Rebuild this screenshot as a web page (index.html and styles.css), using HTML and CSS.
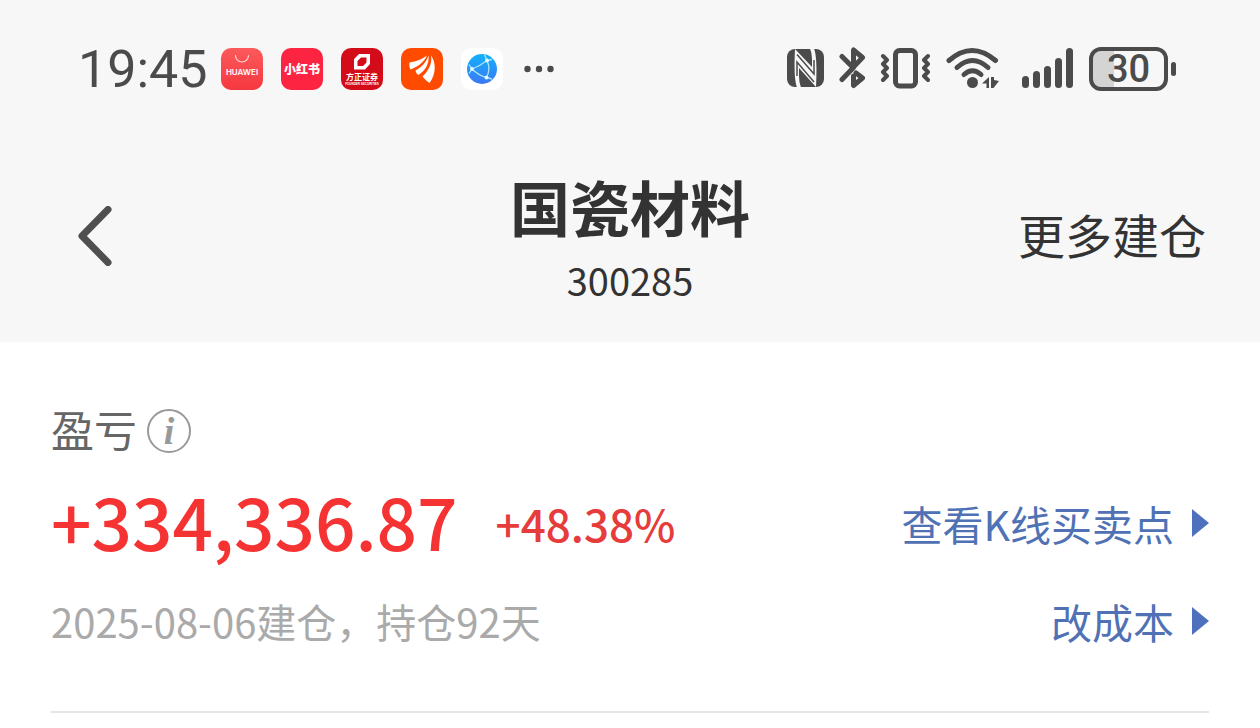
FILE: index.html
```html
<!DOCTYPE html>
<html lang="zh-CN">
<head>
  <meta charset="UTF-8">
  <meta name="viewport" content="width=device-width, initial-scale=1.0">
  <title>国瓷材料 300285</title>
  <link rel="stylesheet" href="styles.css">
</head>
<body>
  <header class="header">
    <div class="status-bar">
      <div class="status-left">
        <time class="clock">19:45</time>
        <div class="apps">
          <svg class="app" viewBox="0 0 42 42" role="img" aria-label="HUAWEI">
            <defs>
              <linearGradient id="hw" x1="0" y1="0" x2="0" y2="1">
                <stop offset="0" stop-color="#fb5a5c"/>
                <stop offset="1" stop-color="#f6373f"/>
              </linearGradient>
            </defs>
            <rect width="42" height="42" rx="10" fill="url(#hw)"/>
            <path d="M14.5 7.500a6.500 6.500 0 0 0 13 0" fill="none" stroke="#ffd9d9" stroke-width="1.200" stroke-linecap="round"/>
            <text x="21" y="27" class="app-text huawei">HUAWEI</text>
          </svg>
          <svg class="app" viewBox="0 0 42 42" role="img" aria-label="小红书">
            <rect width="42" height="42" rx="10" fill="#fd2442"/>
            <text x="21" y="26" class="app-text redbook">小红书</text>
          </svg>
          <svg class="app" viewBox="0 0 42 42" role="img" aria-label="方正证券">
            <rect width="42" height="42" rx="10" fill="#d40b19"/>
            <path fill="#fff" fill-rule="evenodd" d="M18 6h11v10l-5 5.500H13V11zM20 9.500L16.500 13v5H22l3.500-3.500v-5z"/>
            <text x="21" y="32" class="app-text founder">方正证券</text>
            <text x="21" y="37" class="app-text founder-en">FOUNDER SECURITIES</text>
          </svg>
          <svg class="app" viewBox="0 0 42 42" role="img" aria-label="东方财富">
            <rect width="42" height="42" rx="10" fill="#ff4b00"/>
            <g fill="#fff">
              <path d="M26 7.500C21 11 16 13.500 8.500 14.500c-.5 3 0 5 1 7C16 19 22.500 15 26 7.500z"/>
              <path d="M27.500 7.500C25 15 20 19.500 14.500 22.500c.5 2 1.500 3.500 2.800 4.500C24 23 28.500 16 27.500 7.500z"/>
              <path d="M30 7.500c1.500 9-3 15.500-8.500 21 2 2.500 4 4.500 7 6.500C35.500 26 35 14 30 7.500z"/>
            </g>
          </svg>
          <svg class="app" viewBox="0 0 42 42" role="img" aria-label="浏览器">
            <defs>
              <linearGradient id="br" x1="0" y1="0" x2="0" y2="1">
                <stop offset="0" stop-color="#12b2fa"/>
                <stop offset="1" stop-color="#3c78f4"/>
              </linearGradient>
            </defs>
            <rect width="42" height="42" rx="10" fill="#fff"/>
            <circle cx="21" cy="21" r="15" fill="url(#br)"/>
            <g fill="none" stroke="#a6e4fc" stroke-width="1.300">
              <path d="M11 21Q19 18 26 12.500M11 21Q17 27 25.500 29.500M26 12.500Q30 21 25.500 29.500"/>
              <path d="M8 16.500L11 21l-3 4.500M26 12.500L23.500 6.500M26 12.500l5-1M25.500 29.500L31 31"/>
            </g>
            <g fill="#e4faff">
              <circle cx="11" cy="21" r="2"/>
              <circle cx="26" cy="12.500" r="2"/>
              <circle cx="25.500" cy="29.500" r="2"/>
            </g>
          </svg>
        </div>
        <svg class="more" viewBox="0 0 30 8" aria-hidden="true">
          <circle cx="3.500" cy="4" r="3.200"/>
          <circle cx="15" cy="4" r="3.200"/>
          <circle cx="26.500" cy="4" r="3.200"/>
        </svg>
      </div>

      <div class="status-right">
        <!-- icons share a 48px tall box, only the width differs -->
        <svg class="nfc" viewBox="0 0 38 48" aria-hidden="true">
          <rect x="1" y="4" width="37" height="38" rx="8" fill="#4b4b4b"/>
          <g fill="#f7f7f7">
            <path d="M9 4L26 22V14Q26 8 24 3.500H28Q31.500 12 30 42L13 23V31Q13 38 15 42.500H11Q7.500 34 9 4z"/>
          </g>
          <path d="M11 9.500L28 29V15M28 37L11 17v14" fill="none" stroke="#4b4b4b" stroke-width="1.500"/>
        </svg>
        <svg class="bluetooth" viewBox="0 0 26 48" aria-hidden="true">
          <path d="M3 11.500L14 22.500 23.500 12.500 14.500 5V22.500L3 34.500M17 28l6.500 5-9 7.500V31" fill="none" stroke="#4b4b4b" stroke-width="5" stroke-linecap="round" stroke-linejoin="round"/>
        </svg>
        <svg class="vibrate" viewBox="0 0 50 48" aria-hidden="true">
          <g fill="none" stroke="#4b4b4b" stroke-linecap="round" stroke-linejoin="round">
            <rect x="15.500" y="5.500" width="20" height="35.500" rx="4" stroke-width="5"/>
            <path d="M3 11l4 4-4 4 4 4-4 4 4 4-4 4M48 11l-4 4 4 4-4 4 4 4-4 4 4 4" stroke-width="4"/>
          </g>
        </svg>
        <svg class="wifi" viewBox="0 0 54 48" aria-hidden="true">
          <g fill="none" stroke="#4b4b4b" stroke-width="5" stroke-linecap="round">
            <path d="M3 15.500Q26 -4.500 49.500 15.500"/>
            <path d="M11 22.500Q26.500 8.500 42 22.500"/>
            <path d="M18 29.500Q26.500 22 35 29.500"/>
          </g>
          <circle cx="26.500" cy="37.500" r="5.500" fill="#4b4b4b"/>
          <path d="M43 32v11h-2.500v-4.500H36zM45 32h3v3l5 1-5.500 7H45z" fill="#4b4b4b"/>
        </svg>
        <svg class="signal" viewBox="0 0 52 48" aria-hidden="true">
          <g fill="#4b4b4b">
            <rect x="0" y="31" width="7" height="12" rx="3.500"/>
            <rect x="11" y="26" width="7" height="17" rx="3.500"/>
            <rect x="22" y="21" width="7" height="22" rx="3.500"/>
            <rect x="33" y="13" width="7" height="30" rx="3.500"/>
            <rect x="44" y="3" width="7" height="40" rx="3.500"/>
          </g>
        </svg>
        <div class="battery"><span class="battery-body">30</span></div>
      </div>
    </div>

    <nav class="nav">
      <button class="back" aria-label="返回">
        <svg viewBox="0 0 34 60" aria-hidden="true">
          <path d="M30 3.500L4 30l26 26.500" fill="none" stroke="#4f4f4f" stroke-width="7" stroke-linecap="round" stroke-linejoin="round"/>
        </svg>
      </button>
      <div class="stock">
        <h1 class="stock-name">国瓷材料</h1>
        <p class="stock-code">300285</p>
      </div>
      <a class="nav-more" href="#">更多建仓</a>
    </nav>
  </header>

  <main class="content">
    <div class="label-row">
      <h2 class="label">盈亏</h2>
      <button class="info" aria-label="盈亏说明">i</button>
    </div>
    <div class="row profit-row">
      <div class="profit">
        <strong class="amount">+334,336.87</strong>
        <span class="percent">+48.38%</span>
      </div>
      <a class="link" href="#">查看K线买卖点</a>
    </div>
    <div class="row date-row">
      <p class="date">2025-08-06建仓，持仓92天</p>
      <a class="link" href="#">改成本</a>
    </div>
    <hr class="divider">
  </main>
</body>
</html>
```
FILE: styles.css
```css
* {
  box-sizing: border-box;
}
body {
  margin: 0;
  background-color: #fff;
  color: #333;
  font-family: "Noto Sans CJK SC", sans-serif;
}
h1, h2, p {
  margin: 0;
}
a {
  text-decoration: none;
}
button {
  padding: 0;
  border: none;
  background: none;
  cursor: pointer;
}
svg {
  display: block;
}

/* Header */
.header {
  background-color: #f7f7f7;
}
.status-bar {
  display: flex;
  justify-content: space-between;
  align-items: center;
  height: 138px;
  padding: 0 84px 0 78px;
}
.status-left,
.status-right,
.apps {
  display: flex;
  align-items: center;
}
.clock {
  width: 143px;
  padding-top: 2px;
  color: #4b4b4b;
  font-family: Roboto, sans-serif;
  font-size: 52px;
  line-height: 64px;
}
.apps {
  gap: 18px;
}
.app {
  width: 42px;
  height: 42px;
}
.app-text {
  fill: #fff;
  text-anchor: middle;
  font-weight: 700;
}
.huawei {
  font-family: Inter, sans-serif;
  font-size: 8px;
  font-weight: 600;
}
.redbook {
  font-size: 12px;
  font-weight: 900;
}
.founder {
  font-size: 8px;
}
.founder-en {
  font-family: "Liberation Sans", sans-serif;
  font-size: 3px;
}
.more {
  width: 30px;
  height: 8px;
  margin-left: 21px;
  fill: #4b4b4b;
}
.status-right svg {
  height: 48px;
}
.nfc {
  width: 38px;
  margin-right: 15px;
}
.bluetooth {
  width: 26px;
  margin-right: 15px;
}
.vibrate {
  width: 50px;
  margin-right: 16px;
}
.wifi {
  width: 54px;
  margin-right: 22px;
}
.signal {
  width: 52px;
  margin-right: 15px;
}
.battery {
  display: flex;
  align-items: center;
  gap: 3px;
}
.battery::after {
  content: "";
  width: 5px;
  height: 14px;
  border-radius: 3px;
  background-color: #4b4b4b;
}
.battery-body {
  width: 79px;
  height: 44px;
  border: 4px solid #4b4b4b;
  border-radius: 12px;
  background: linear-gradient(to right, #d4d4d4 30%, #f7f7f7 30%);
  color: #4b4b4b;
  font-family: Roboto, sans-serif;
  font-size: 38px;
  font-weight: 500;
  line-height: 36px;
  text-align: center;
}

.nav {
  display: grid;
  grid-template-columns: 1fr auto 1fr;
  align-items: center;
  padding: 32px 54px 44px;
}
.back {
  justify-self: start;
  padding: 4px 0 0 24px;
}
.back svg {
  width: 34px;
  height: 60px;
}
.stock {
  display: flex;
  flex-direction: column;
  gap: 20px;
  text-align: center;
}
.stock-name {
  font-size: 60px;
  font-weight: 700;
  line-height: 72px;
}
.stock-code {
  font-size: 38px;
  line-height: 36px;
}
.nav-more {
  justify-self: end;
  color: #333;
  font-size: 47px;
  line-height: 60px;
}

/* Profit */
.content {
  padding: 66px 51px 15px;
}
.label-row {
  display: flex;
  align-items: center;
  gap: 10px;
  height: 46px;
}
.label {
  padding-bottom: 6px;
  color: #666;
  font-size: 43px;
  font-weight: 400;
  line-height: 46px;
}
.info {
  width: 44px;
  height: 44px;
  border: 2px solid #999;
  border-radius: 50%;
  color: #999;
  font-family: "Liberation Serif", serif;
  font-size: 38px;
  font-style: italic;
  font-weight: 700;
  line-height: 38px;
}
.row {
  display: flex;
  justify-content: space-between;
  align-items: center;
}
.profit-row {
  height: 80px;
  margin-top: 29px;
}
.date-row {
  height: 48px;
  margin-top: 34px;
}
.profit {
  display: flex;
  align-items: center;
  gap: 38px;
  color: #f63333;
}
.amount {
  padding-bottom: 6px;
  font-size: 71px;
  font-weight: 500;
  line-height: 80px;
}
.percent {
  color: #e63c3c;
  font-size: 44px;
  font-weight: 500;
  line-height: 60px;
}
.date {
  color: #aaa;
  font-size: 40px;
  line-height: 48px;
}
.link {
  display: flex;
  align-items: center;
  gap: 18px;
  color: #5072b5;
  font-size: 41px;
  line-height: 48px;
}
.link::after {
  content: "";
  border-style: solid;
  border-width: 14px 0 14px 17px;
  border-color: transparent transparent transparent #4f71bd;
}
.divider {
  height: 2px;
  margin: 66px 0 0;
  border: none;
  background-color: #e5e6e8;
}
```
